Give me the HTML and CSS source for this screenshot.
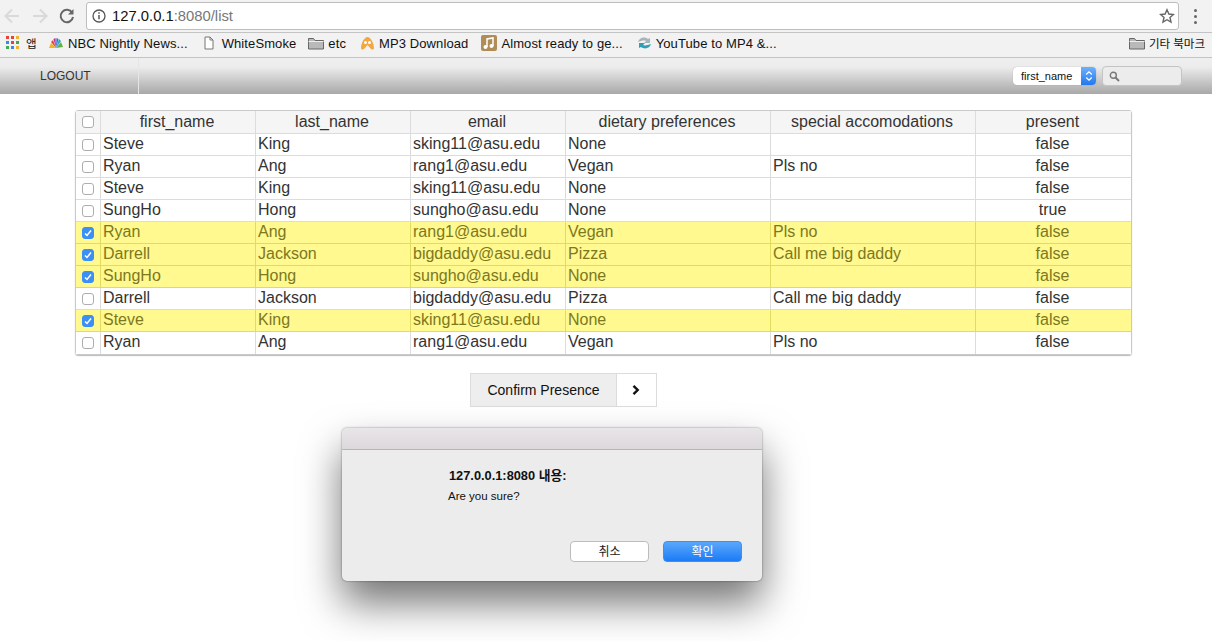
FILE: index.html
```html
<!DOCTYPE html>
<html lang="en">
<head>
  <meta charset="utf-8">
  <title>127.0.0.1:8080/list</title>
  <link rel="stylesheet" href="styles.css">
</head>
<body>
  <div class="toolbar">
    <svg class="tool" width="20" height="20" viewBox="0 0 20 20"><path d="M17 10H4M10 3.500L3.500 10l6.500 6.500" fill="none" stroke="#d9d9d9" stroke-width="2"/></svg>
    <svg class="tool" width="20" height="20" viewBox="0 0 20 20"><path d="M3 10h13M10 3.500l6.500 6.500-6.500 6.500" fill="none" stroke="#d9d9d9" stroke-width="2"/></svg>
    <svg class="tool" width="20" height="20" viewBox="0 0 20 20"><path d="M15.200 6.800A6.200 6.200 0 1 0 16 11" fill="none" stroke="#666" stroke-width="2"/><path d="M16.500 3v5.500H11z" fill="#666"/></svg>
    <div class="omnibox">
      <svg width="14" height="14" viewBox="0 0 14 14"><circle cx="7" cy="7" r="6" fill="none" stroke="#555" stroke-width="1.300"/><path d="M7 6v4.300M7 3.300v1.500" stroke="#555" stroke-width="1.500"/></svg>
      <span class="url">127.0.0.1<span class="url-rest">:8080/list</span></span>
      <svg class="star" width="16" height="16" viewBox="0 0 16 16"><path d="M8 1.800l1.900 4.200 4.500.5-3.400 3 1 4.500L8 11.700 4 14l1-4.500-3.400-3 4.500-.5z" fill="none" stroke="#666" stroke-width="1.400"/></svg>
    </div>
    <div class="menu-dots"><i></i><i></i><i></i></div>
  </div>

  <div class="bookmarks">
    <a class="bm bm-apps">
      <svg width="14" height="14" viewBox="0 0 14 14">
        <rect x="0" y="0" width="3" height="3" fill="#e2463a"/><rect x="5" y="0" width="3" height="3" fill="#e2463a"/><rect x="10" y="0" width="3" height="3" fill="#f2b233"/>
        <rect x="0" y="5" width="3" height="3" fill="#3f86e8"/><rect x="5" y="5" width="3" height="3" fill="#e2463a"/><rect x="10" y="5" width="3" height="3" fill="#3fa85a"/>
        <rect x="0" y="10" width="3" height="3" fill="#3fa85a"/><rect x="5" y="10" width="3" height="3" fill="#3f86e8"/><rect x="10" y="10" width="3" height="3" fill="#f2b233"/>
      </svg>
      <span class="kr">앱</span>
    </a>
    <a class="bm bm-nbc">
      <svg width="16" height="12" viewBox="0 0 16 12">
        <path d="M8 11L1 11 3 6z" fill="#f4b31f"/><path d="M8 11L3 5l2-2z" fill="#e8482f"/><path d="M8 11L5.500 2l2-1z" fill="#b5338a"/><path d="M8 11l.5-10 2 1z" fill="#3a66c4"/><path d="M8 11l3-9 2 2z" fill="#2e9fd8"/><path d="M8 11l5-6 2 5z" fill="#5bb544"/>
      </svg>
      NBC Nightly News...
    </a>
    <a class="bm bm-file">
      <svg width="12" height="14" viewBox="0 0 12 14"><path d="M2 1h5l3 3v9H2z" fill="#fff" stroke="#777"/><path d="M7 1v3h3" fill="none" stroke="#777"/></svg>
      WhiteSmoke
    </a>
    <a class="bm bm-etc">
      <svg width="16" height="13" viewBox="0 0 16 13"><path d="M.5 12V1.500h5l1.500 2h8.500V12z" fill="#b9b9b9" stroke="#666"/><path d="M.5 4.500h15" stroke="#eee"/></svg>
      etc
    </a>
    <a class="bm bm-mp3">
      <svg width="15" height="15" viewBox="0 0 15 15"><path d="M7.500 1C4 1 1 8 1 12c0 2 2.500 2 3.500.5L7.500 9l3 3.500c1 1.500 3.500 1.500 3.500-.5 0-4-3-11-6.500-11z" fill="#f5a63c"/><circle cx="5.500" cy="6.500" r="1.500" fill="#fff"/><circle cx="9.500" cy="6.500" r="1.500" fill="#fff"/></svg>
      MP3 Download
    </a>
    <a class="bm bm-music">
      <svg width="16" height="16" viewBox="0 0 16 16"><rect width="16" height="16" rx="2" fill="#b08d57"/><path d="M6 12V4l6-1v8" fill="none" stroke="#fff" stroke-width="1.500"/><circle cx="4.500" cy="12" r="2" fill="#fff"/><circle cx="10.500" cy="11" r="2" fill="#fff"/></svg>
      Almost ready to ge...
    </a>
    <a class="bm bm-yt">
      <svg width="15" height="16" viewBox="0 0 15 16"><path d="M1 7c1-4 6-6 10-3l2-1v5H7l2-2C7 5 4 6 1 7z" fill="#a9b4ba"/><path d="M14 9c-1 4-6 6-10 3l-2 1V8h6l-2 2c2 1 5 0 8-1z" fill="#2f9fb8"/></svg>
      YouTube to MP4 &amp;...
    </a>
    <a class="bm bm-other">
      <svg width="16" height="13" viewBox="0 0 16 13"><path d="M.5 12V1.500h5l1.500 2h8.500V12z" fill="#b9b9b9" stroke="#666"/><path d="M.5 4.500h15" stroke="#eee"/></svg>
      <span class="kr">기타 북마크</span>
    </a>
  </div>

  <nav class="navbar">
    <a class="nav-link">LOGOUT</a>
    <div class="nav-right">
      <div class="field-select">
        <span>first_name</span>
        <span class="select-arrows">
          <svg width="8" height="12" viewBox="0 0 8 12"><path d="M1.200 4.500L4 1.800l2.800 2.700M1.200 7.500L4 10.200l2.800-2.700" fill="none" stroke="#fff" stroke-width="1.300"/></svg>
        </span>
      </div>
      <div class="search-box">
        <svg width="11" height="11" viewBox="0 0 11 11"><circle cx="4.300" cy="4.300" r="3" fill="none" stroke="#777" stroke-width="1.400"/><path d="M6.500 6.500L10 10" stroke="#777" stroke-width="1.800"/></svg>
      </div>
    </div>
  </nav>

  <main class="content">
    <table class="grid">
      <colgroup>
        <col class="c-check"><col class="c-name"><col class="c-name"><col class="c-name"><col class="c-wide"><col class="c-wide"><col class="c-name">
      </colgroup>
      <thead>
        <tr>
          <th><span class="chk"></span></th>
          <th>first_name</th><th>last_name</th><th>email</th><th>dietary preferences</th><th>special accomodations</th><th>present</th>
        </tr>
      </thead>
      <tbody>
        <tr><td class="cell-check"><span class="chk"></span></td><td>Steve</td><td>King</td><td>sking11@asu.edu</td><td>None</td><td></td><td class="center">false</td></tr>
        <tr><td class="cell-check"><span class="chk"></span></td><td>Ryan</td><td>Ang</td><td>rang1@asu.edu</td><td>Vegan</td><td>Pls no</td><td class="center">false</td></tr>
        <tr><td class="cell-check"><span class="chk"></span></td><td>Steve</td><td>King</td><td>sking11@asu.edu</td><td>None</td><td></td><td class="center">false</td></tr>
        <tr><td class="cell-check"><span class="chk"></span></td><td>SungHo</td><td>Hong</td><td>sungho@asu.edu</td><td>None</td><td></td><td class="center">true</td></tr>
        <tr class="selected"><td class="cell-check"><span class="chk on"><svg width="10" height="10" viewBox="0 0 10 10"><path d="M2 5.500l2 2L8 2.500" fill="none" stroke="#fff" stroke-width="1.500"/></svg></span></td><td>Ryan</td><td>Ang</td><td>rang1@asu.edu</td><td>Vegan</td><td>Pls no</td><td class="center">false</td></tr>
        <tr class="selected"><td class="cell-check"><span class="chk on"><svg width="10" height="10" viewBox="0 0 10 10"><path d="M2 5.500l2 2L8 2.500" fill="none" stroke="#fff" stroke-width="1.500"/></svg></span></td><td>Darrell</td><td>Jackson</td><td>bigdaddy@asu.edu</td><td>Pizza</td><td>Call me big daddy</td><td class="center">false</td></tr>
        <tr class="selected"><td class="cell-check"><span class="chk on"><svg width="10" height="10" viewBox="0 0 10 10"><path d="M2 5.500l2 2L8 2.500" fill="none" stroke="#fff" stroke-width="1.500"/></svg></span></td><td>SungHo</td><td>Hong</td><td>sungho@asu.edu</td><td>None</td><td></td><td class="center">false</td></tr>
        <tr><td class="cell-check"><span class="chk"></span></td><td>Darrell</td><td>Jackson</td><td>bigdaddy@asu.edu</td><td>Pizza</td><td>Call me big daddy</td><td class="center">false</td></tr>
        <tr class="selected"><td class="cell-check"><span class="chk on"><svg width="10" height="10" viewBox="0 0 10 10"><path d="M2 5.500l2 2L8 2.500" fill="none" stroke="#fff" stroke-width="1.500"/></svg></span></td><td>Steve</td><td>King</td><td>sking11@asu.edu</td><td>None</td><td></td><td class="center">false</td></tr>
        <tr><td class="cell-check"><span class="chk"></span></td><td>Ryan</td><td>Ang</td><td>rang1@asu.edu</td><td>Vegan</td><td>Pls no</td><td class="center">false</td></tr>
      </tbody>
    </table>

    <div class="confirm">
      <span class="confirm-label">Confirm Presence</span>
      <span class="confirm-arrow">
        <svg width="8" height="12" viewBox="0 0 8 12"><path d="M1.500 1.800L5.700 6l-4.200 4.200" fill="none" stroke="#111" stroke-width="2.400"/></svg>
      </span>
    </div>
  </main>

  <div class="dialog">
    <div class="dialog-title"></div>
    <div class="dialog-body">
      <div class="dialog-head">127.0.0.1:8080 <span class="kr">내용:</span></div>
      <div class="dialog-msg">Are you sure?</div>
      <div class="dialog-actions">
        <span class="btn kr">취소</span>
        <span class="btn btn-primary kr">확인</span>
      </div>
    </div>
  </div>
</body>
</html>
```

FILE: styles.css
```css
html, body {margin:0; height:641px; overflow:hidden; background:#fff;}
body {font-family:"Liberation Sans",Arial,sans-serif; color:#333; position:relative;}
.kr {font-family:"Liberation Sans","Noto Sans CJK KR",sans-serif;}

/* browser chrome */
.toolbar {display:flex; align-items:center; height:32px; box-sizing:border-box; padding-left:2px; background:#f2f2f2;}
.tool {margin-right:8px; flex:none;}
.tool:nth-child(2) {margin-right:7px;}
.tool:nth-child(3) {margin-right:9px;}
.omnibox {display:flex; align-items:center; flex:1; height:28px; box-sizing:border-box; padding:0 3px 0 5px; background:#fff; border:1px solid #bdbdbd; border-radius:3px;}
.url {margin-left:6px; font-size:14.800px; color:#111;}
.url-rest {color:#777;}
.star {margin-left:auto;}
.menu-dots {display:flex; flex-direction:column; gap:3px; width:33px; align-items:center;}
.menu-dots i {width:3px; height:3px; border-radius:50%; background:#666;}

.bookmarks {display:flex; align-items:center; height:20px; padding:0 7px 4px 6px; background:#f2f2f2; border-top:1px solid #c4c4c4; border-bottom:1px solid #c4c4c4; font-size:13px; letter-spacing:.1px; color:#111;}
.bookmarks .kr {font-size:11.500px; letter-spacing:0;}
.bm {display:flex; align-items:center; gap:4px; white-space:nowrap;}
.bm-apps {gap:6px; width:42px;}
.bm-file {margin-left:15px; gap:7px;}
.bm-etc {margin-left:12px;}
.bm-mp3 {margin-left:14px;}
.bm-music {margin-left:13px;}
.bm-yt {margin-left:14px;}
.bm-other {margin-left:auto;}

/* app nav */
.navbar {display:flex; align-items:stretch; height:36px; background:linear-gradient(#efefef 0%, #ececec 25%, #a8a8a8 100%); font-size:12px;}
.nav-link {display:flex; align-items:center; width:98px; padding-left:40px; border-right:1px solid #e6e6e6; color:#333;}
.nav-right {display:flex; align-items:center; margin-left:auto; margin-right:30px; gap:6px;}
.field-select {display:flex; align-items:center; justify-content:space-between; width:83px; height:18px; box-sizing:border-box; padding-left:8px; background:#fff; border-radius:4px; box-shadow:0 0 1px #888; font-size:11px; color:#111; overflow:hidden;}
.select-arrows {display:flex; align-items:center; justify-content:center; width:15px; height:18px; background:linear-gradient(#6fb0fb,#2278f0);}
.search-box {display:flex; align-items:center; width:80px; height:20px; box-sizing:border-box; padding-left:6px; background:#ececec; border:1px solid #c4c4c4; border-radius:4px;}

/* table */
.content {display:flex; flex-direction:column; align-items:center; padding:16px 5px 0 0;}
.grid {width:1057px; table-layout:fixed; border-collapse:separate; border-spacing:0; font-size:16px; border:1px solid #c9c9c9; border-radius:3px; box-shadow:0 1px 1px #bbb;}
.c-check {width:25px;}
.c-name {width:155px;}
.c-wide {width:205px;}
.grid th, .grid td {box-sizing:border-box; border-right:1px solid #dcdcdc; border-bottom:1px solid #dcdcdc;}
.grid th {height:23px; padding:0 2px 1px 0; font-weight:normal; background:#f5f5f5; color:#333;}
.grid td {height:22px; padding:0 2px 1px; background:#fff; white-space:nowrap;}
.grid th:last-child, .grid td:last-child {border-right:0;}
.grid tbody tr:last-child td {border-bottom:0; padding-bottom:2px;}
.grid td.center {text-align:center; padding-right:4px;}
.grid td.cell-check, .grid th:first-child {padding:0 0 1px; text-align:center;}
.grid .selected td {background:#fff98f; color:#7d7820; border-color:#e2db62;}
.chk {display:inline-flex; align-items:center; justify-content:center; width:12px; height:12px; box-sizing:border-box; vertical-align:middle; background:#fff; border:1px solid #adadad; border-radius:3px;}
.chk.on {background:#3b8ff5; border-color:#3b8ff5;}

/* confirm button */
.confirm {display:flex; height:34px; margin:18px 80px 0 0; box-sizing:border-box; border:1px solid #dcdcdc; font-size:14px; color:#111;}
.confirm-label {display:flex; align-items:center; padding:0 16px; background:#eee; border-right:1px solid #dcdcdc;}
.confirm-arrow {display:flex; align-items:center; justify-content:center; width:39px; background:#fff;}

/* js confirm sheet, sits over the page */
.dialog {position:absolute; left:342px; top:428px; width:420px; height:153px; border-radius:5px; background:#ececec; box-shadow:0 0 2px rgba(0,0,0,.5), 0 22px 40px rgba(0,0,0,.55); display:flex; flex-direction:column;}
.dialog-title {height:21px; flex:none; border-radius:5px 5px 0 0; background:linear-gradient(#e9e6e9,#dcd8dc); border-bottom:1px solid #b8b3b8;}
.dialog-body {padding:15px 20px 0 106px; color:#111; flex:1; display:flex; flex-direction:column;}
.dialog-head {font-size:12.800px; font-weight:bold; margin:0 0 6px 1px;}
.dialog-msg {font-size:11.500px;}
.dialog-actions {display:flex; justify-content:flex-end; gap:14px; margin-top:auto; margin-bottom:19px;}
.btn {display:flex; align-items:center; justify-content:center; width:79px; height:21px; padding-bottom:2px; box-sizing:border-box; font-size:12px; background:#fff; border:1px solid #bcbcbc; border-radius:4px; color:#222;}
.btn-primary {background:linear-gradient(#5aa8fb,#1c7bf5); border-color:#3d8ff5; color:#fff;}
```
